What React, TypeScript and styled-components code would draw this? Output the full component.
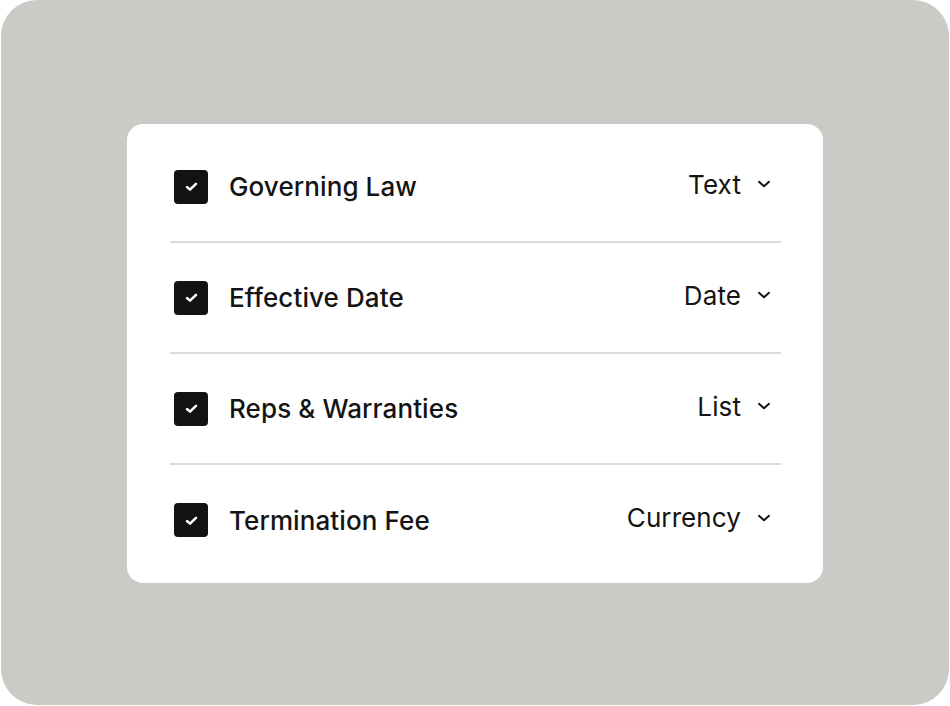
import React from 'react';
import styled, { createGlobalStyle } from 'styled-components';

interface Field {
  id: string;
  label: string;
  type: string;
}

const fields: Field[] = [
  { id: 'law', label: 'Governing Law', type: 'Text' },
  { id: 'date', label: 'Effective Date', type: 'Date' },
  { id: 'reps', label: 'Reps & Warranties', type: 'List' },
  { id: 'fee', label: 'Termination Fee', type: 'Currency' },
];

const GlobalStyle = createGlobalStyle`
  html, body {
    margin: 0;
    padding: 0;
    background: #ffffff;
  }
  #root {
    padding: 0 1px 1px 1px;
  }
  * {
    box-sizing: border-box;
  }
`;

const Frame = styled.div`
  width: 948px;
  height: 705px;
  border-radius: 36px;
  background: #cbcac6;
  padding-top: 2px;
  display: flex;
  align-items: center;
  justify-content: center;
  font-family: Inter, 'Noto Sans', sans-serif;
  color: #141414;
`;

const Card = styled.div`
  width: 696px;
  background: #ffffff;
  border-radius: 16px;
  padding: 8px 42px 8px 43px;
  display: flex;
  flex-direction: column;
`;

const Row = styled.div<{ $last: boolean }>`
  height: ${({ $last }) => ($last ? '110px' : '111px')};
  display: flex;
  align-items: center;
  padding: 0 10px 0 4px;
  border-bottom: ${({ $last }) => ($last ? 'none' : '2px solid #dcdbd7')};
`;

const Checkbox = styled.div`
  width: 34px;
  height: 34px;
  border-radius: 4px;
  background: #121212;
  display: flex;
  align-items: center;
  justify-content: center;
  flex-shrink: 0;
`;

const Label = styled.span`
  margin-left: 21px;
  margin-top: 0;
  font-size: 26px;
  font-weight: 460;
  letter-spacing: 0.1px;
  flex: 1;
`;

const TypeSelect = styled.div`
  display: flex;
  align-items: center;
  gap: 16px;
  margin-top: -5px;
`;

const TypeName = styled.span`
  font-size: 26px;
  font-weight: 400;
  letter-spacing: 0.1px;
`;

const CheckIcon = () => (
  <svg width="15" height="13" viewBox="0 0 15 13" fill="none">
    <path d="M3 7 6 9.6 12 3.8" stroke="#fff" strokeWidth="2.5" strokeLinecap="round" strokeLinejoin="round" />
  </svg>
);

const Chevron = () => (
  <svg width="14" height="8" viewBox="0 0 14 8" fill="none">
    <path d="M2 1.8 7 6.3 12 1.8" stroke="#141414" strokeWidth="2" strokeLinecap="round" strokeLinejoin="round" />
  </svg>
);

const App: React.FC = () => {
  return (
    <>
      <GlobalStyle />
      <Frame>
        <Card>
          {fields.map((field, i) => (
            <Row key={field.id} $last={i === fields.length - 1}>
              <Checkbox>
                <CheckIcon />
              </Checkbox>
              <Label>{field.label}</Label>
              <TypeSelect>
                <TypeName>{field.type}</TypeName>
                <Chevron />
              </TypeSelect>
            </Row>
          ))}
        </Card>
      </Frame>
    </>
  );
};

export default App;
